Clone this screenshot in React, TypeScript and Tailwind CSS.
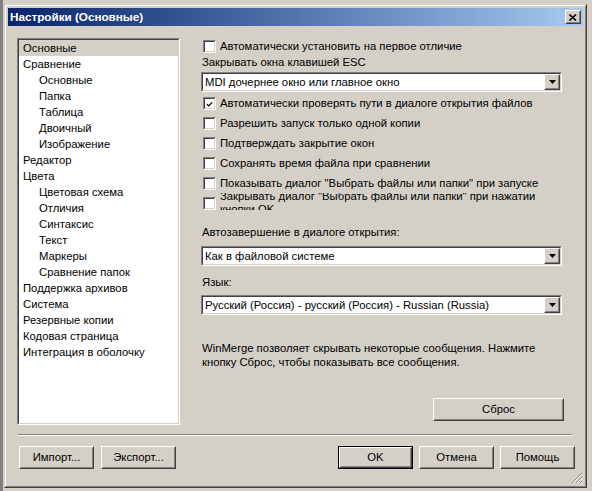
import React from "react";

const TREE: { label: string; child?: boolean; selected?: boolean }[] = [
  { label: "Основные", selected: true },
  { label: "Сравнение" },
  { label: "Основные", child: true },
  { label: "Папка", child: true },
  { label: "Таблица", child: true },
  { label: "Двоичный", child: true },
  { label: "Изображение", child: true },
  { label: "Редактор" },
  { label: "Цвета" },
  { label: "Цветовая схема", child: true },
  { label: "Отличия", child: true },
  { label: "Синтаксис", child: true },
  { label: "Текст", child: true },
  { label: "Маркеры", child: true },
  { label: "Сравнение папок", child: true },
  { label: "Поддержка архивов" },
  { label: "Система" },
  { label: "Резервные копии" },
  { label: "Кодовая страница" },
  { label: "Интеграция в оболочку" },
];

function Sunken({ className = "", children }: { className?: string; children?: React.ReactNode }) {
  return (
    <div className={`border border-t-[#808080] border-l-[#808080] border-b-white border-r-white ${className}`}>
      <div className="flex h-full w-full border border-t-[#404040] border-l-[#404040] border-b-[#d4d0c8] border-r-[#d4d0c8] bg-white">
        {children}
      </div>
    </div>
  );
}

function Raised({ className = "", children }: { className?: string; children?: React.ReactNode }) {
  return (
    <div className={`border border-t-white border-l-white border-b-[#404040] border-r-[#404040] ${className}`}>
      <div className="flex h-full w-full items-center justify-center border border-t-[#d4d0c8] border-l-[#d4d0c8] border-b-[#808080] border-r-[#808080] bg-[#d4d0c8]">
        {children}
      </div>
    </div>
  );
}

function Combo({ value }: { value: string }) {
  return (
    <Sunken className="h-[20px] w-full">
      <div className="flex-1 overflow-hidden whitespace-nowrap pl-[2px] leading-[16px]">{value}</div>
      <Raised className="h-[16px] w-[16px]">
        <svg width="7" height="4" viewBox="0 0 7 4">
          <polygon points="0,0 7,0 3.5,4" fill="#000" />
        </svg>
      </Raised>
    </Sunken>
  );
}

function Box({ checked }: { checked?: boolean }) {
  return (
    <Sunken className="h-[13px] w-[13px] shrink-0">
      {checked && (
        <svg width="9" height="9" viewBox="0 0 9 9" className="ml-[1px] mt-[1px]">
          <path d="M1 3 L3 5 L7 1 L7 3 L3 7 L1 5 Z" fill="#000" />
        </svg>
      )}
    </Sunken>
  );
}

function Check({ label, checked }: { label: string; checked?: boolean }) {
  return (
    <div className="flex h-[20px] items-center pl-[2px]">
      <Box checked={checked} />
      <span className="ml-[4px] whitespace-nowrap">{label}</span>
    </div>
  );
}

function Button({ label, isDefault, className = "" }: { label: string; isDefault?: boolean; className?: string }) {
  const btn = (
    <Raised className={isDefault ? "h-full w-full" : `h-[23px] w-[75px] ${className}`}>
      <span className="leading-none">{label}</span>
    </Raised>
  );
  if (!isDefault) return btn;
  return <div className={`h-[23px] w-[75px] border border-black ${className}`}>{btn}</div>;
}

export default function App() {
  return (
    <div className="h-[491px] w-[592px] overflow-hidden border-l-[3px] border-[#808080] bg-[#d4d0c8] pl-[1px] pt-[4px] font-['Liberation_Sans',Arial,sans-serif] text-[11.3px] text-black">
      <div className="h-[484px] w-[583px] border border-t-[#d4d0c8] border-l-[#d4d0c8] border-b-[#404040] border-r-[#404040]">
        <div className="relative flex h-full w-full flex-col border border-t-white border-l-white border-b-[#808080] border-r-[#808080] p-[2px]">
          {/* title bar */}
          <div className="flex h-[18px] items-center bg-gradient-to-r from-[#0a246a] to-[#a6caf0] pl-[2px] pr-[2px]">
            <span className="flex-1 text-[11.7px] font-bold text-white">Настройки (Основные)</span>
            <Raised className="h-[14px] w-[16px]">
              <svg width="8" height="7" viewBox="0 0 8 7">
                <path d="M0.5 0.5 L7 6.5 M7 0.5 L0.5 6.5" stroke="#000" strokeWidth="1.6" />
              </svg>
            </Raised>
          </div>

          {/* main */}
          <div className="mt-[11px] flex pl-[9px]">
            <Sunken className="mt-[1px] h-[387px] w-[163px]">
              <div className="flex w-full flex-col">
                {TREE.map((t, i) => (
                  <div
                    key={i}
                    className={`h-[16px] whitespace-nowrap leading-[16px] ${t.child ? "pl-[20px]" : "pl-[4px]"} ${t.selected ? "bg-[#d4d0c8]" : ""}`}
                  >
                    {t.label}
                  </div>
                ))}
              </div>
            </Sunken>

            <div className="ml-[21px] flex w-[361px] flex-col">
              <div className="flex h-[18px] items-center pl-[2px]">
                <Box />
                <span className="ml-[4px]">Автоматически установить на первое отличие</span>
              </div>
              <div className="h-[14px] pl-[1px] leading-[14px]">Закрывать окна клавишей ESC</div>
              <div className="mt-[3px]">
                <Combo value="MDI дочернее окно или главное окно" />
              </div>
              <div className="mt-[1px]">
                <Check label="Автоматически проверять пути в диалоге открытия файлов" checked />
                <Check label="Разрешить запуск только одной копии" />
                <Check label="Подтверждать закрытие окон" />
                <Check label="Сохранять время файла при сравнении" />
                <Check label={'Показывать диалог "Выбрать файлы или папки" при запуске'} />
                {/* this label is clipped by its control in the original dialog */}
                <div className="flex h-[20px] items-center pl-[2px]">
                  <Box />
                  <div className="ml-[4px] h-[17px] self-start overflow-hidden">
                    <div className="mt-[-3px] leading-[13px]">
                      Закрывать диалог "Выбрать файлы или папки" при нажатии
                      <br />
                      кнопки OK
                    </div>
                  </div>
                </div>
              </div>
              <div className="mt-[12px] h-[14px] pl-[1px] leading-[14px]">Автозавершение в диалоге открытия:</div>
              <div className="mt-[7px]">
                <Combo value="Как в файловой системе" />
              </div>
              <div className="mt-[9px] h-[14px] pl-[1px] leading-[14px]">Язык:</div>
              <div className="mt-[6px]">
                <Combo value="Русский (Россия) - русский (Россия) - Russian (Russia)" />
              </div>
              <div className="mt-[26px] pl-[1px] leading-[14px]">
                WinMerge позволяет скрывать некоторые сообщения. Нажмите
                <br />
                кнопку Сброс, чтобы показывать все сообщения.
              </div>
              <div className="mr-[-2px] mt-[29px] flex justify-end">
                <Raised className="h-[23px] w-[131px]">
                  <span>Сброс</span>
                </Raised>
              </div>
            </div>
          </div>

          {/* separator */}
          <div className="ml-[10px] mt-[9px] h-[2px] w-[554px] border-t border-b border-t-[#808080] border-b-white" />

          {/* buttons */}
          <div className="mt-[10px] flex pl-[11px] pr-[8px]">
            <Button label="Импорт..." />
            <Button label="Экспорт..." className="ml-[7px]" />
            <div className="flex-1" />
            <Button label="OK" isDefault />
            <Button label="Отмена" className="ml-[6px]" />
            <Button label="Помощь" className="ml-[6px]" />
          </div>

          {/* size grip */}
          <svg className="absolute bottom-[2px] right-[2px]" width="12" height="12" viewBox="0 0 12 12">
            <path d="M11 1 L1 11 M11 5 L5 11 M11 9 L9 11" stroke="#808080" strokeWidth="1" />
            <path d="M11 2 L2 11 M11 6 L6 11 M11 10 L10 11" stroke="#fff" strokeWidth="1" />
          </svg>
        </div>
      </div>
    </div>
  );
}
